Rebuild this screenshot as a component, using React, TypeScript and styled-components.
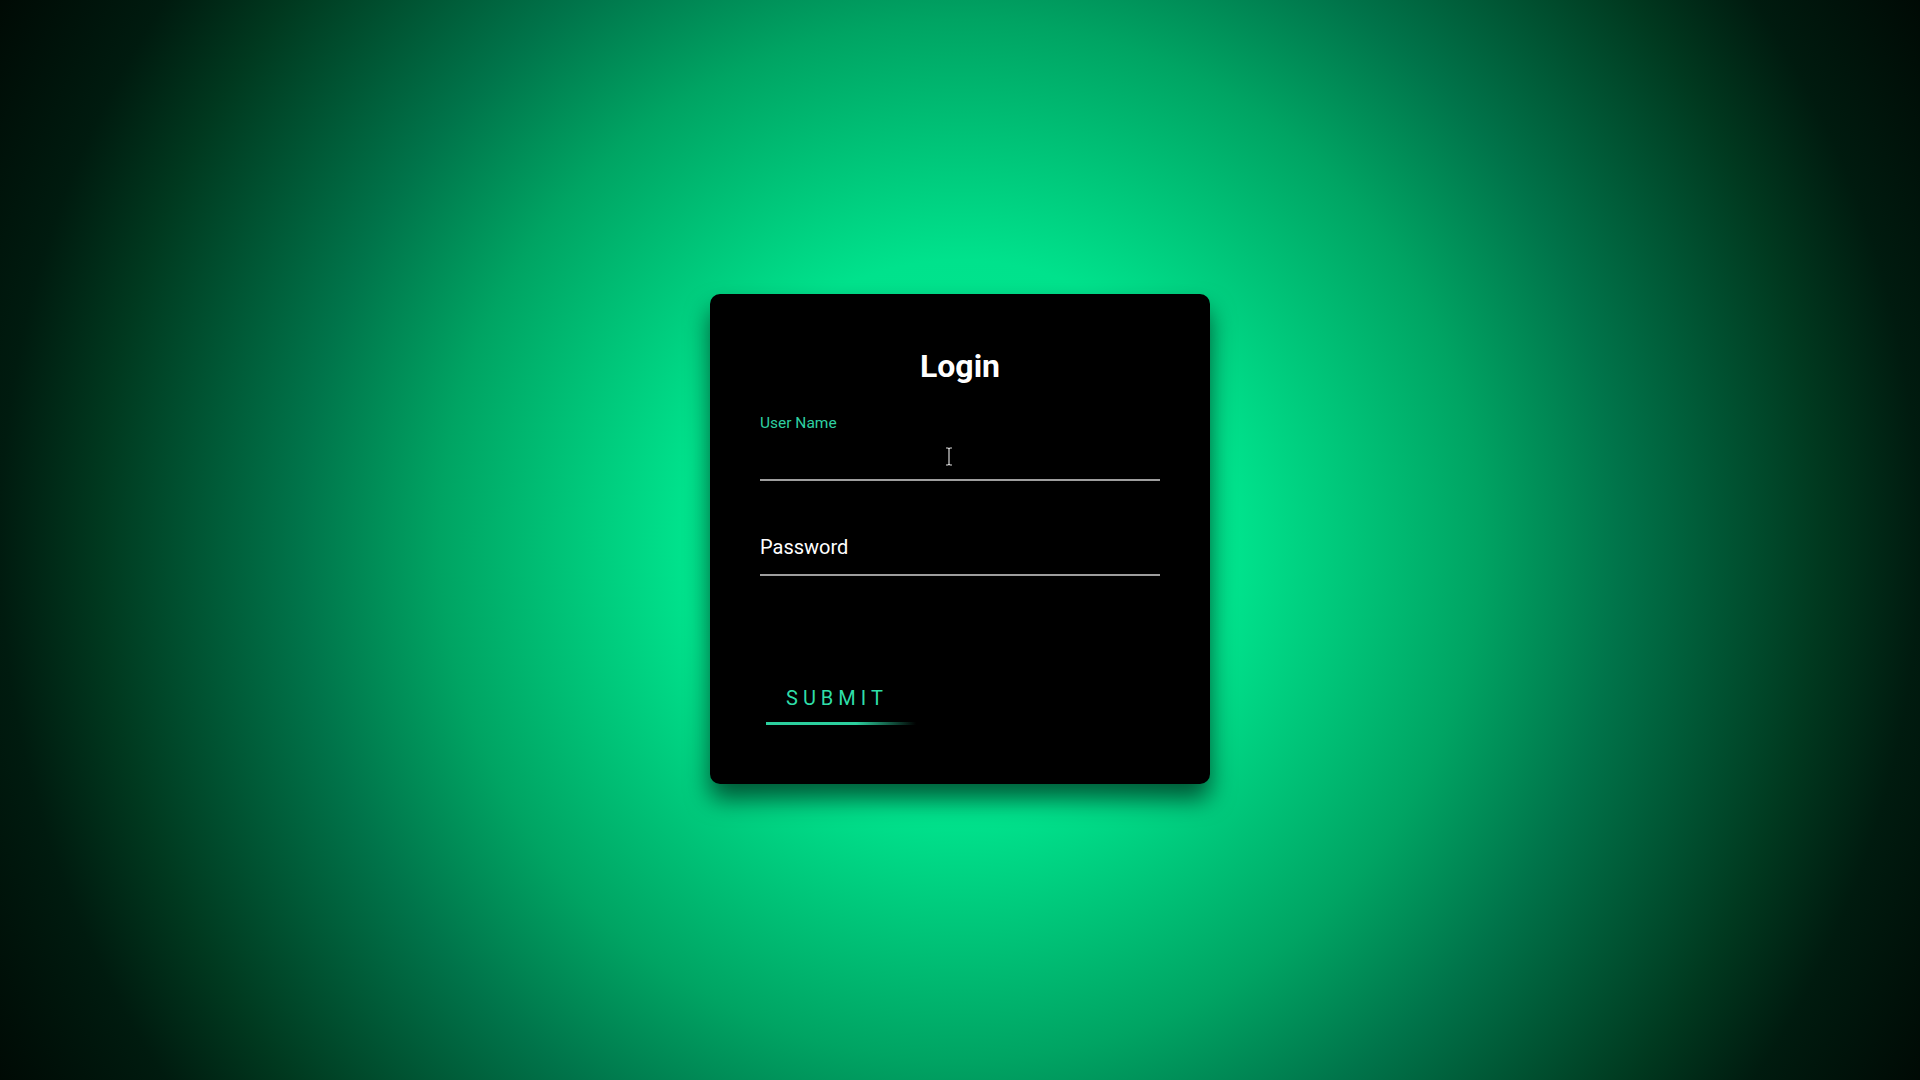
import styled, { createGlobalStyle } from "styled-components";

const GlobalStyle = createGlobalStyle`
  * {
    box-sizing: border-box;
  }
  html, body {
    margin: 0;
    padding: 0;
    height: 100%;
  }
  body {
    font-family: Roboto, "Liberation Sans", Arial, sans-serif;
    background: #000;
  }
`;

const Page = styled.div`
  min-height: 100vh;
  display: flex;
  align-items: center;
  justify-content: center;
  padding-bottom: 2px;
  background: radial-gradient(
    circle at 50% 50%,
    #00ec93 0px,
    #00e28c 280px,
    #00a463 520px,
    #00744a 660px,
    #00391f 860px,
    #001b0f 960px,
    #000904 1110px
  );
`;

const Card = styled.form`
  width: 500px;
  padding: 53px 50px 59.5px;
  background: #000;
  border-radius: 10px;
  box-shadow: 0 15px 25px rgba(0, 0, 0, 0.6);
  display: flex;
  flex-direction: column;
`;

const Title = styled.h2`
  margin: 0 0 31px;
  color: #fff;
  font-size: 32px;
  line-height: 38px;
  font-weight: 700;
  text-align: center;
`;

const Field = styled.div<{ last?: boolean }>`
  position: relative;
  padding-top: 16px;
  margin-bottom: ${({ last }) => (last ? "0" : "30px")};
`;

const Input = styled.input`
  display: block;
  width: 100%;
  padding: 12px 0 11px;
  font-family: inherit;
  font-size: 20px;
  line-height: normal;
  color: #fff;
  background: transparent;
  border: none;
  border-bottom: 2px solid #9e9e9e;
  outline: none;
  cursor: text;
`;

const Label = styled.label<{ raised?: boolean }>`
  position: absolute;
  left: 0;
  pointer-events: none;
  top: ${({ raised }) => (raised ? "0" : "24px")};
  font-size: ${({ raised }) => (raised ? "15.5px" : "20px")};
  line-height: ${({ raised }) => (raised ? "1" : "normal")};
  color: ${({ raised }) => (raised ? "#2fd0a2" : "#fff")};
`;

const Cursor = styled.svg`
  position: absolute;
  left: 185px;
  top: 31px;
  pointer-events: none;
`;

const Submit = styled.button`
  position: relative;
  align-self: flex-start;
  margin: 97.5px 0 0 6px;
  padding: 12.5px 20px 14.5px 20px;
  font-family: inherit;
  font-size: 20px;
  line-height: normal;
  letter-spacing: 5px;
  color: #2fdea8;
  background: transparent;
  border: none;
  cursor: pointer;
  width: 150px;
  text-align: left;
`;

const Line = styled.span`
  position: absolute;
  left: 0;
  bottom: 0;
  width: 100%;
  height: 3px;
  background: linear-gradient(90deg, #2ccf9e 0%, #2ccf9e 60%, rgba(44, 207, 158, 0) 100%);
`;

export default function App() {
  return (
    <>
      <GlobalStyle />
      <Page>
        <Card onSubmit={(e) => e.preventDefault()}>
          <Title>Login</Title>
          <Field>
            <Input type="text" aria-label="User Name" />
            <Label raised>User Name</Label>
            <Cursor width="8" height="19" viewBox="0 0 8 19">
              <path
                d="M1 1h2l1 1 1-1h2M4 2v15M1 18h2l1-1 1 1h2"
                fill="none"
                stroke="#d8d8d8"
                strokeWidth="1.2"
              />
            </Cursor>
          </Field>
          <Field last>
            <Input type="password" aria-label="Password" />
            <Label>Password</Label>
          </Field>
          <Submit type="submit">
            SUBMIT
            <Line />
          </Submit>
        </Card>
      </Page>
    </>
  );
}
